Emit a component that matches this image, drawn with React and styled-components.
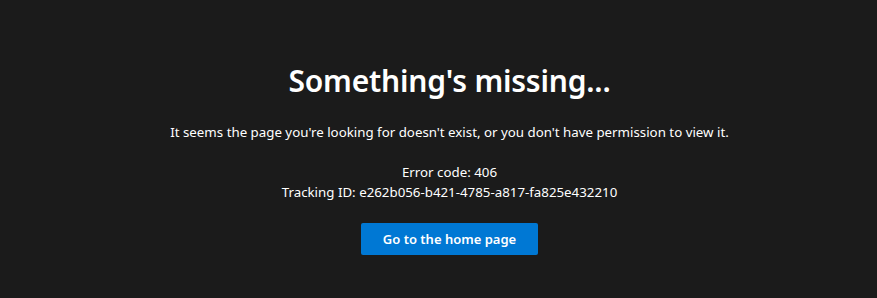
import React from 'react';
import styled, { createGlobalStyle } from 'styled-components';

const GlobalStyle = createGlobalStyle`
  html, body {
    margin: 0;
    padding: 0;
    background: #1b1b1b;
  }
  body {
    font-family: "Segoe UI", "Noto Sans", "Open Sans", sans-serif;
    color: #ffffff;
  }
`;

const Page = styled.main`
  display: flex;
  flex-direction: column;
  align-items: center;
  height: 298px;
  box-sizing: border-box;
  padding: 60px 0 0 22px;
  text-align: center;
`;

const Title = styled.h1`
  margin: 0;
  font-size: 30px;
  font-weight: 600;
  line-height: 42px;
  letter-spacing: -0.2px;
`;

const Message = styled.p`
  margin: 0;
  margin-top: ${(p) => p.$gap || 0}px;
  font-size: 13.3px;
  line-height: 20px;
`;

const HomeButton = styled.button`
  margin-top: 21px;
  width: 177px;
  height: 32px;
  border: none;
  border-radius: 2px;
  background: #0078d4;
  color: #ffffff;
  font-family: inherit;
  font-size: 13px;
  font-weight: 600;
  cursor: pointer;

  &:hover {
    background: #106ebe;
  }
`;

export default function App() {
  return (
    <>
      <GlobalStyle />
      <Page>
        <Title>Something's missing...</Title>
        <Message $gap={20}>
          It seems the page you're looking for doesn't exist, or you don't have permission to view it.
        </Message>
        <Message $gap={20}>Error code: 406</Message>
        <Message>Tracking ID: e262b056-b421-4785-a817-fa825e432210</Message>
        <HomeButton>Go to the home page</HomeButton>
      </Page>
    </>
  );
}
